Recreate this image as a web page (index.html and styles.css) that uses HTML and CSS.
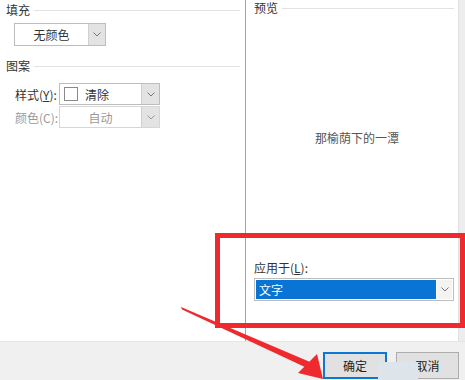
FILE: index.html
```html
<!DOCTYPE html>
<html lang="zh-CN">
<head>
  <meta charset="UTF-8">
  <title>边框和底纹 - 底纹</title>
  <link rel="stylesheet" href="styles.css">
</head>
<body>

  <div class="dialog">
    <div class="main">
      <div class="left">
        <div class="group-title"><span>填充</span><i></i></div>
        <div class="select fill-select">
          <span class="value center">无颜色</span>
          <span class="drop"><svg width="8" height="5" viewBox="0 0 8 5"><path d="M0.5 0.5 L4 4 L7.5 0.5" fill="none" stroke="#777" stroke-width="1"/></svg></span>
        </div>

        <div class="group-title pattern-title"><span>图案</span><i></i></div>
        <div class="row">
          <span class="label">样式(<u>Y</u>):</span>
          <div class="select row-select">
            <span class="value"><b class="swatch"></b>清除</span>
            <span class="drop"><svg width="8" height="5" viewBox="0 0 8 5"><path d="M0.5 0.5 L4 4 L7.5 0.5" fill="none" stroke="#777" stroke-width="1"/></svg></span>
          </div>
        </div>
        <div class="row">
          <span class="label disabled">颜色(C):</span>
          <div class="select row-select is-disabled">
            <span class="value center">自动</span>
            <span class="drop"><svg width="8" height="5" viewBox="0 0 8 5"><path d="M0.5 0.5 L4 4 L7.5 0.5" fill="none" stroke="#999" stroke-width="1"/></svg></span>
          </div>
        </div>
      </div>

      <div class="right">
        <div class="group-title preview-title"><span>预览</span><i></i></div>
        <div class="preview">那榆荫下的一潭</div>
        <div class="apply-label">应用于(<u>L</u>):</div>
        <div class="select apply-select">
          <span class="value selected">文字</span>
          <span class="drop"><svg width="8" height="5" viewBox="0 0 8 5"><path d="M0.5 0.5 L4 4 L7.5 0.5" fill="none" stroke="#777" stroke-width="1"/></svg></span>
        </div>
      </div>

      <div class="edge"></div>
    </div>

    <div class="footer">
      <button class="btn btn-primary">确定</button>
      <button class="btn">取消</button>
    </div>
  </div>

  <!-- annotations drawn over the screenshot -->
  <div class="highlight-box"></div>
  <div class="smudge"></div>
  <svg class="arrow" width="465" height="380" viewBox="0 0 465 380">
    <polygon points="181,307 182,309.5 306.5,367.8 309.5,361.8" fill="#ee2a2e"/>
    <polygon points="317,354 298,373 323,379" fill="#ee2a2e"/>
  </svg>

</body>
</html>
```

FILE: styles.css
```css
body {
  margin: 0;
  width: 465px;
  height: 380px;
  overflow: hidden;
  position: relative;
  background: #fff;
  font-family: "Noto Sans CJK SC", "Microsoft YaHei", sans-serif;
  font-size: 12px;
  color: #333;
}

.dialog {
  display: flex;
  flex-direction: column;
  height: 380px;
}

.main {
  display: flex;
  height: 341px;
}

.left {
  width: 240px;
  padding-right: 5px;
}

.group-title {
  display: flex;
  align-items: center;
  height: 20px;
  padding-left: 6px;
  line-height: 1;
}

.group-title i {
  flex: 1;
  height: 1px;
  background: #e3e3e3;
  margin-left: 4px;
}

.select {
  display: flex;
  height: 23px;
  box-sizing: border-box;
  border: 1px solid #bdbdbd;
  background: #fff;
}

.select .value {
  flex: 1;
  display: flex;
  align-items: center;
  padding-left: 4px;
}

.select .value.center {
  justify-content: center;
  padding-left: 0;
}

.select .drop {
  width: 16px;
  display: flex;
  align-items: center;
  justify-content: center;
  background: #e3e3e3;
  border-left: 1px solid #d0d0d0;
}

.fill-select {
  width: 92px;
  margin: 3px 0 0 14px;
}

.pattern-title {
  margin-top: 10px;
}

.row {
  display: flex;
  align-items: center;
  padding-left: 15px;
  margin-top: 1px;
}

.pattern-title + .row {
  margin-top: 7px;
}

.label {
  width: 44px;
  color: #333;
}

.label.disabled {
  color: #9a9a9a;
}

.row-select {
  width: 101px;
  height: 22px;
}

.row-select .drop {
  width: 17px;
}

.swatch {
  display: inline-block;
  width: 12px;
  height: 12px;
  border: 1px solid #8a8a8a;
  margin-right: 7px;
}

.is-disabled {
  border-color: #d6d6d6;
  color: #9a9a9a;
}

.right {
  width: 212px;
  border-left: 1px solid #a3a3a3;
  display: flex;
  flex-direction: column;
}

.preview-title {
  height: 16px;
  padding-left: 8px;
  padding-right: 4px;
}

.preview {
  height: 242px;
  display: flex;
  align-items: center;
  justify-content: center;
  padding-left: 10px;
  color: #555;
}

.apply-label {
  height: 20px;
  line-height: 20px;
  padding-left: 8px;
}

.apply-select {
  margin: 0 4px 0 8px;
  padding: 1px;
}

.apply-select .value.selected {
  background: #0a74d4;
  color: #fff;
  padding-left: 3px;
  margin-right: 1px;
}

.apply-select .drop {
  width: 15px;
  background: #f3f3f3;
  border-left: none;
}

.edge {
  flex: 1;
  background: #ededed;
  border-left: 1px solid #e0e0e0;
}

.footer {
  flex: 1;
  background: #f0f0f0;
  border-top: 1px solid #e6e6e6;
  display: flex;
  justify-content: flex-end;
  align-items: flex-start;
  gap: 9px;
  padding: 10px 6px 0 0;
}

.btn {
  width: 63px;
  height: 27px;
  font-family: inherit;
  font-size: 12px;
  color: #222;
  background: #e1e1e1;
  border: 1px solid #adadad;
  padding: 0;
}

.btn-primary {
  width: 64px;
  border: 2px solid #0a78d4;
}

.highlight-box {
  position: absolute;
  left: 215px;
  top: 233px;
  width: 250px;
  height: 95px;
  box-sizing: border-box;
  border: 5px solid #ee2a2e;
}

.smudge {
  position: absolute;
  left: 378px;
  top: 362px;
  width: 40px;
  height: 18px;
  background: #dde4ea;
}

.arrow {
  position: absolute;
  left: 0;
  top: 0;
}
```
